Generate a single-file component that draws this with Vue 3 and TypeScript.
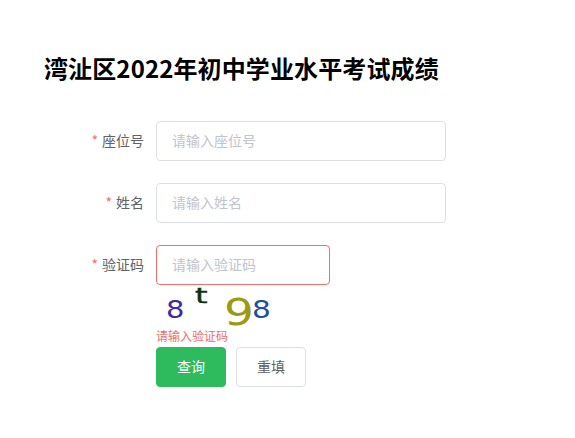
<script setup lang="ts">
import { ref } from 'vue'

const seat = ref('')
const name = ref('')
const code = ref('')

const fields = [
  { label: '座位号', placeholder: '请输入座位号', model: seat },
  { label: '姓名', placeholder: '请输入姓名', model: name },
]
</script>

<template>
  <main class="page">
    <h1 class="title">湾沚区2022年初中学业水平考试成绩</h1>
    <form class="form" @submit.prevent>
      <div v-for="field in fields" :key="field.label" class="form-item">
        <label class="label"><span class="star">*</span>{{ field.label }}</label>
        <input v-model="field.model.value" class="input" :placeholder="field.placeholder" />
      </div>
      <div class="form-item form-item--code">
        <label class="label"><span class="star">*</span>验证码</label>
        <div class="code-box">
          <input v-model="code" class="input input--error" placeholder="请输入验证码" />
          <svg class="captcha" width="120" height="40" viewBox="0 0 120 40">
            <text transform="translate(10 33) scale(1.45 1.24)" fill="#3f2a9e" class="cap">8</text>
            <text transform="translate(39 18) scale(1.6 1.08)" fill="#12300f" class="cap cap--t">t</text>
            <text transform="translate(68 40) scale(2.35 1.85)" fill="#9c9a12" class="cap">9</text>
            <text transform="translate(96 33) scale(1.48 1.24)" fill="#1c4fa0" class="cap">8</text>
          </svg>
          <div class="error">请输入验证码</div>
        </div>
      </div>
      <div class="actions">
        <button class="btn btn--primary" type="submit">查询</button>
        <button class="btn" type="reset">重填</button>
      </div>
    </form>
  </main>
</template>

<style scoped>
.page {
  width: 575px;
  height: 438px;
  padding: 50px 44px 0;
  box-sizing: border-box;
  background: #fff;
  overflow: hidden;
  font-family: "Noto Sans CJK SC", "Liberation Sans", sans-serif;
}
.title {
  margin: 0 0 36px;
  font-size: 24px;
  line-height: 35px;
  font-weight: 700;
  letter-spacing: 0.12px;
  color: #000;
}
.form-item {
  display: flex;
  margin-bottom: 22px;
}
.form-item--code {
  margin-bottom: 3px;
}
.label {
  width: 112px;
  height: 40px;
  padding-right: 12px;
  box-sizing: border-box;
  text-align: right;
  font-size: 14px;
  line-height: 38px;
  color: #606266;
}
.star {
  margin-right: 4px;
  color: #f56c6c;
}
.input {
  display: block;
  width: 290px;
  height: 40px;
  padding: 0 15px 2px;
  box-sizing: border-box;
  border: 1px solid #dcdfe6;
  border-radius: 4px;
  outline: none;
  font-family: inherit;
  font-size: 14px;
  color: #606266;
}
.input::placeholder {
  color: #c0c4cc;
}
.input--error {
  width: 174px;
  border-color: #f56c6c;
}
.captcha {
  display: block;
  overflow: visible;
}
.cap {
  font-family: "DejaVu Sans", sans-serif;
  font-size: 20px;
}
.cap--t {
  stroke: #12300f;
  stroke-width: 0.4;
}
.error {
  margin-top: 3px;
  font-size: 12px;
  line-height: 16px;
  color: #f56c6c;
}
.actions {
  display: flex;
  gap: 10px;
  padding-left: 112px;
}
.btn {
  width: 70px;
  height: 40px;
  padding: 0 0 2px;
  border: 1px solid #dcdfe6;
  border-radius: 4px;
  background: #fff;
  font-family: inherit;
  font-size: 14px;
  color: #606266;
}
.btn--primary {
  border-color: #2dbb5e;
  background: #2dbb5e;
  color: #fff;
}
</style>
